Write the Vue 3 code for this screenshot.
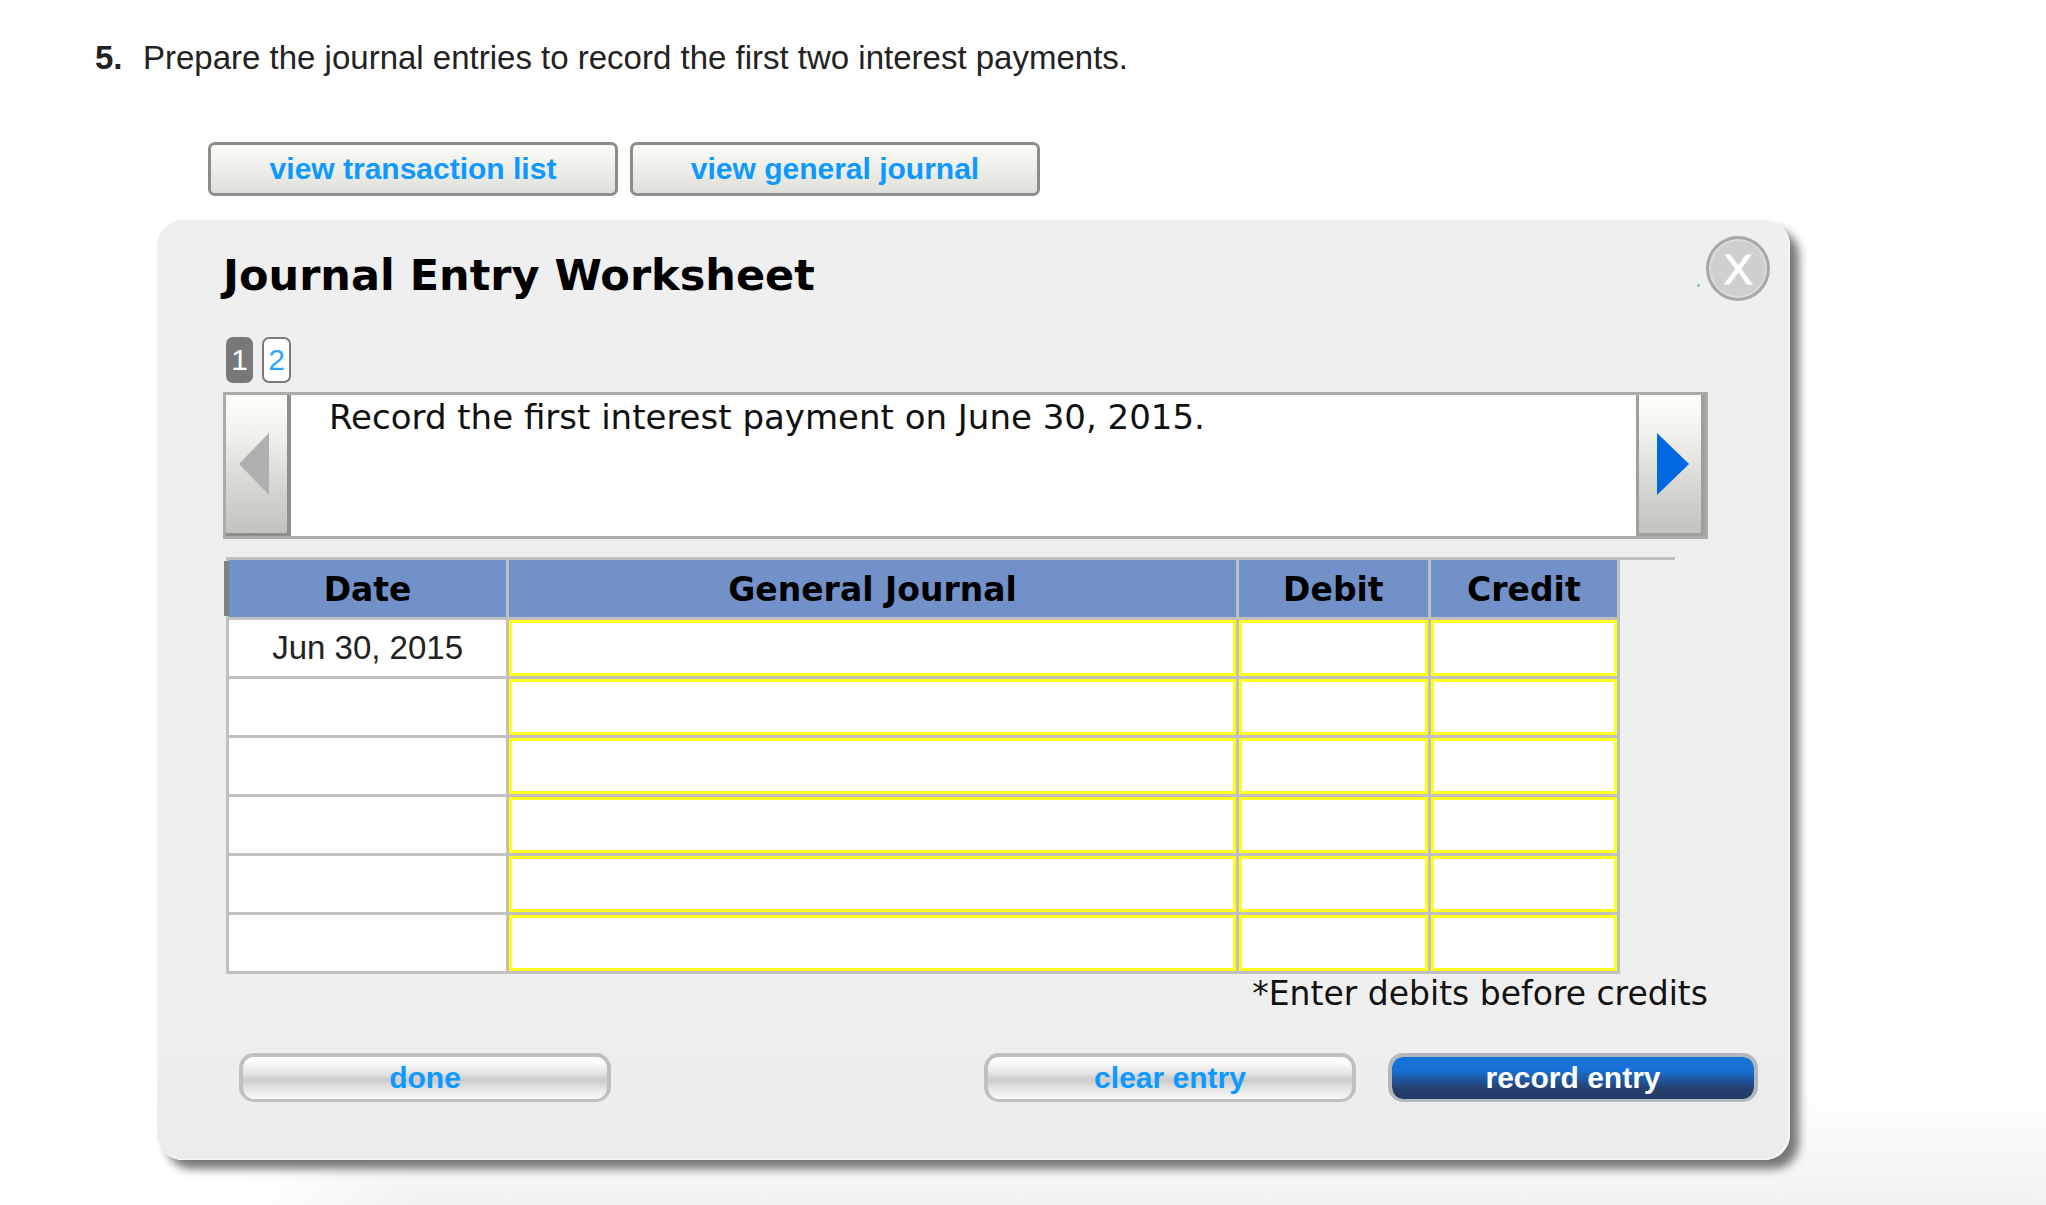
<script setup>
import { ref } from 'vue'

const steps = [1, 2]
const current = ref(1)
const rows = ref([
  { date: 'Jun 30, 2015', account: '', debit: '', credit: '' },
  { date: '', account: '', debit: '', credit: '' },
  { date: '', account: '', debit: '', credit: '' },
  { date: '', account: '', debit: '', credit: '' },
  { date: '', account: '', debit: '', credit: '' },
  { date: '', account: '', debit: '', credit: '' },
])

function clearEntry() {
  rows.value.forEach((row) => {
    row.account = ''
    row.debit = ''
    row.credit = ''
  })
}
</script>

<template>
  <main class="page">
    <p class="question"><b class="number">5.</b><span>Prepare the journal entries to record the first two interest payments.</span></p>

    <div class="views">
      <button type="button" class="view-btn">view transaction list</button>
      <button type="button" class="view-btn">view general journal</button>
    </div>

    <section class="worksheet">
      <header class="head">
        <h1>Journal Entry Worksheet</h1>
        <div class="closer">
          <i class="dot"></i>
          <button type="button" class="close" aria-label="Close">X</button>
        </div>
      </header>

      <nav class="steps">
        <button
          v-for="step in steps"
          :key="step"
          type="button"
          class="step"
          :class="{ active: step === current }"
        >{{ step }}</button>
      </nav>

      <div class="prompt">
        <button type="button" class="arrow prev" aria-label="Previous">
          <svg width="30" height="62" viewBox="0 0 30 62"><path d="M30 0V62L0 31Z" fill="#b0b0b0" /></svg>
        </button>
        <p>Record the first interest payment on June 30, 2015.</p>
        <button type="button" class="arrow next" aria-label="Next">
          <svg width="32" height="62" viewBox="0 0 32 62"><path d="M0 0V62L32 31Z" fill="#0068e0" /></svg>
        </button>
      </div>

      <div class="ledger">
        <table>
          <colgroup>
            <col class="c-date" />
            <col class="c-account" />
            <col class="c-debit" />
            <col />
          </colgroup>
          <thead>
            <tr>
              <th scope="col">Date</th>
              <th scope="col">General Journal</th>
              <th scope="col">Debit</th>
              <th scope="col">Credit</th>
            </tr>
          </thead>
          <tbody>
            <tr v-for="(row, i) in rows" :key="i">
              <td>{{ row.date }}</td>
              <td><input v-model="row.account" type="text" :aria-label="`General Journal, line ${i + 1}`" /></td>
              <td><input v-model="row.debit" type="text" :aria-label="`Debit, line ${i + 1}`" /></td>
              <td><input v-model="row.credit" type="text" :aria-label="`Credit, line ${i + 1}`" /></td>
            </tr>
          </tbody>
        </table>
      </div>

      <p class="hint">*Enter debits before credits</p>

      <footer class="actions">
        <button type="button" class="pill">done</button>
        <button type="button" class="pill push" @click="clearEntry">clear entry</button>
        <button type="button" class="pill primary">record entry</button>
      </footer>
    </section>
  </main>
</template>

<style>
body {
  margin: 0;
  background: #fff;
}
</style>

<style scoped>
.page {
  box-sizing: border-box;
  min-height: 100vh;
  padding: 36px 256px 45px 157px;
  background:
    linear-gradient(to right, #fff 240px, transparent 420px),
    linear-gradient(to bottom, #fff 90%, #f2f2f2 100%);
  font-family: "Liberation Sans", Arial, sans-serif;
  font-variant-ligatures: none;
  color: #222;
}
p, h1 {
  margin: 0;
}
button {
  box-sizing: border-box;
  margin: 0;
  padding: 0;
  font-family: inherit;
  cursor: pointer;
}
.question {
  display: flex;
  margin-left: -62px;
  font-size: 33px;
  line-height: 44px;
}
.number {
  width: 48px;
}
.views {
  display: flex;
  gap: 12px;
  margin: 62px 0 24px 51px;
}
.view-btn {
  width: 410px;
  height: 54px;
  border: 3px solid #8c8c8a;
  border-radius: 7px;
  background: linear-gradient(#fbfcf5, #dfe0da);
  color: #0d99ff;
  font-size: 30px;
  font-weight: bold;
}
.worksheet {
  box-sizing: border-box;
  padding: 16px 82px 58px 66px;
  border-radius: 26px;
  background: linear-gradient(#efefef 85%, #ececec);
  box-shadow: 9px 9px 10px 0 #777, inset -2px -1px 0 #f6f6f6;
}
.head {
  display: flex;
  justify-content: space-between;
  margin-right: -62px;
}
h1 {
  padding-top: 13px;
  font: bold 43px/52px Verdana, "DejaVu Sans", sans-serif;
  color: #000;
}
.closer {
  display: flex;
  align-items: center;
  gap: 6px;
}
.dot {
  width: 3px;
  height: 3px;
  margin-top: 34px;
  background: #9ccbb0;
}
.close {
  width: 64px;
  height: 65px;
  border: 3px solid #a8a8a8;
  border-radius: 50%;
  background: #cfcfcf;
  box-shadow: inset 0 0 0 2px #dcdcdc;
  color: #fff;
  font-size: 43px;
  line-height: 54px;
  -webkit-text-stroke: 1px #fff;
}
.steps {
  display: flex;
  gap: 9px;
  margin: 36px 0 9px 3px;
}
.step {
  width: 29px;
  height: 46px;
  border: 2px solid #7a7a7a;
  border-radius: 7px;
  background: #fff;
  color: #2ea5ff;
  font-size: 30px;
}
.step.active {
  width: 27px;
  background: #787878;
  color: #fff;
}
.prompt {
  display: flex;
  box-sizing: border-box;
  height: 147px;
  border: 3px solid #ababa8;
  background: #fff;
}
.prompt p {
  flex: 1;
  padding-left: 38px;
  font: 34px/44px Verdana, "DejaVu Sans", sans-serif;
  color: #111;
}
.arrow {
  display: flex;
  align-items: center;
  justify-content: center;
  border: 0 solid #8f8f8a;
  background: linear-gradient(#fffffa, #f1f0ea 30%, #d0d1ca 75%, #c2c3bc);
}
.prev {
  width: 65px;
  padding-right: 6px;
  border-width: 0 4px 3px 0;
}
.next {
  width: 69px;
  padding-left: 6px;
  border-width: 0 4px 3px 3px;
  border-color: #a0a09a;
}
.ledger {
  margin: 18px 33px 0 3px;
  padding-right: 55px;
  border-top: 3px solid #c0c0c0;
}
table {
  width: 100%;
  margin-top: -3px;
  table-layout: fixed;
  border-collapse: separate;
  border-spacing: 3px;
  background: #c0c0c0;
}
.c-date {
  width: 20.1%;
}
.c-account {
  width: 52.7%;
}
.c-debit {
  width: 13.7%;
}
th {
  height: 57px;
  box-sizing: border-box;
  padding: 3px 0 0;
  background: #7391c9;
  color: #000;
  font: bold 33px/40px Verdana, "DejaVu Sans", sans-serif;
}
th:first-child {
  box-shadow: -6px 0 0 -1px #808080;
}
td {
  height: 56px;
  padding: 0;
  background: #fff;
  font-size: 33px;
  line-height: 40px;
  text-align: center;
}
td input {
  display: block;
  box-sizing: border-box;
  width: 100%;
  height: 56px;
  padding: 0 8px;
  border: 3px solid #ffff1e;
  border-radius: 0;
  outline: 0;
  background: #fff;
  font: inherit;
}
.hint {
  font: 33px/40px Verdana, "DejaVu Sans", sans-serif;
  color: #111;
  text-align: right;
}
.actions {
  display: flex;
  gap: 32px;
  margin: 39px -50px 0 16px;
}
.pill {
  width: 372px;
  height: 49px;
  border: 4px solid #c0c0c0;
  border-bottom-width: 3px;
  border-radius: 15px;
  background: linear-gradient(#fdfdfd 10%, #e8e8e8 35%, #cbcbcb 55%, #e4e4e4 75%, #fafafa);
  color: #0d99ff;
  font-size: 30px;
  font-weight: bold;
  line-height: 40px;
}
.push {
  margin-left: auto;
}
.primary {
  width: 370px;
  border-color: #b3b7bd;
  background: linear-gradient(#1672d6 30%, #25406f 75%, #243a66);
  background-clip: padding-box;
  color: #fff;
}
</style>
